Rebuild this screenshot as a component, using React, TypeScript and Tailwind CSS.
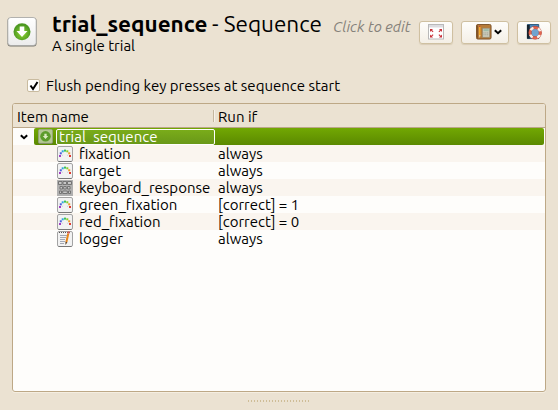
import React from "react";

const SequenceArrow = ({ size, faded = false }: { size: number; faded?: boolean }) => (
  <svg width={size} height={size} viewBox="0 0 30 30" className="block shrink-0">
    <defs>
      <linearGradient id="tile" x2="0" y2="1">
        <stop stopColor="#ffffff" />
        <stop offset="1" stopColor="#ececec" />
      </linearGradient>
      <radialGradient id="leaf" cy=".6">
        <stop stopColor="#91d532" />
        <stop offset="1" stopColor="#4c9820" />
      </radialGradient>
    </defs>
    <rect x=".5" y=".7" width="29" height="28.8" rx="3" fill="#77766f" />
    <rect x=".8" y=".5" width="28.4" height="28" rx="3" fill={faded ? "#b4c795" : "url(#tile)"} stroke={faded ? "#8a9c70" : "#a5a5a2"} strokeWidth=".8" />
    <circle cx="15" cy="14.7" r={faded ? 10.5 : 8.5} fill={faded ? "#5c9c2b" : "url(#leaf)"} />
    <path d="M12.700 9.500h4.600v4.500h3.200L15 20 9.500 14h3.200z" fill={faded ? "#dcebc4" : "#fff"} />
  </svg>
);

const Tile = () => (
  <>
    <rect x=".5" y=".5" width="15" height="15" rx="1.500" fill="#f2f2f2" stroke="#a3a3a3" />
    <path d="M1.500 15.500h13" stroke="#777" />
  </>
);

const SketchIcon = () => (
  <svg width="16" height="16" viewBox="0 0 16 16" className="block shrink-0">
    <Tile />
    <g>
      <rect x="2" y="9" width="2" height="2" fill="#a13bc4" />
      <rect x="2.800" y="6.300" width="2" height="2" fill="#4a62dc" />
      <rect x="4.700" y="4.300" width="2" height="2" fill="#31a5e0" />
      <rect x="7" y="3.600" width="2" height="2" fill="#36c05c" />
      <rect x="9.300" y="4.300" width="2" height="2" fill="#8ccc28" />
      <rect x="11.200" y="6.300" width="2" height="2" fill="#f09a24" />
      <rect x="12" y="9" width="2" height="2" fill="#e03a30" />
      <path d="M5.200 10l.5-1.300M10.300 8.700l.5 1.300" stroke="#c9c8e0" fill="none" strokeWidth=".8" />
    </g>
  </svg>
);

const KeyboardIcon = () => (
  <svg width="16" height="16" viewBox="0 0 16 16" className="block shrink-0">
    <rect width="16" height="16" fill="#b0b0b0" />
    <g fill="#c6c6c6" stroke="#6c6c6c" strokeWidth=".9">
      <path d="M1.500 1.500h3.500v3h-3.500zM6 1.500h3.500v3h-3.500zM10.500 1.500h4v3h-4z" />
      <path d="M3 6.500h2.500v2.500h-2.500zM6.700 6.500h2.500v2.500h-2.500zM10.500 6.500h2.500v2.500h-2.500z" />
      <path d="M2.500 11h2v2.500h-2zM5.700 11h4.600v2.500h-4.600zM11.500 11h2v2.500h-2z" />
    </g>
  </svg>
);

const LoggerIcon = () => (
  <svg width="16" height="16" viewBox="0 0 16 16" className="block shrink-0">
    <Tile />
    <path d="M2 1.500h12" stroke="#555" strokeDasharray="1 1" />
    <path d="M3 4.500h7M3 6.500h6M3 8.500h5M3 10.500h5M3 12.500h4" stroke="#9a9fae" strokeWidth=".9" />
    <path d="M11.300 2.500L9.400 11" stroke="#e8861a" strokeWidth="2" />
    <path d="M10.400 2.200l2 .5.5-2-2-.5z" fill="#e0605a" />
    <path d="M8.400 10.800l2 .5L8.500 14z" fill="#5b4329" />
  </svg>
);

const FullscreenIcon = () => (
  <svg width="16" height="16" viewBox="0 0 16 16" className="block">
    <rect x=".5" y=".5" width="15" height="14.500" fill="#fff" stroke="#b9b9b9" />
    <path d="M1 1h14v2.500H1z" fill="#dcdce0" />
    <g fill="#c8323a">
      <path d="M2 5h3L4 6l1.500 1.500-.8.800L3.200 6.800 2 8zM14 5h-3l1 1-1.500 1.500.8.800 1.500-1.500L14 8zM2 13.500h3l-1-1L5.500 11l-.8-.8-1.500 1.500L2 10.500zM14 13.500h-3l1-1-1.500-1.500.8-.8 1.500 1.500 1.200-1.200z" />
    </g>
  </svg>
);

const NotebookIcon = () => (
  <svg width="16" height="16" viewBox="0 0 17 17" className="block shrink-0">
    <rect x=".5" y=".5" width="15.500" height="15.500" rx="1.500" fill="#b67c3a" stroke="#795027" />
    <path d="M1.500 1.500v14" stroke="#7d4d20" strokeWidth="1" />
    <path d="M4 2.500v10" stroke="#f6ad2d" strokeWidth="1.600" />
    <path d="M3.200 12h1.600L4 15z" fill="#eee0bd" />
    <path d="M3.200 2.500h1.600" stroke="#cb4b36" strokeWidth="1.500" />
    <rect x="7" y="4.500" width="7.500" height="9.500" fill="#cfcfbd" stroke="#908c79" strokeWidth=".7" />
    <rect x="8" y="5.500" width="5.500" height="2.200" fill="#9dbba9" />
    <path d="M8 9.500h5.500M8 11.500h5.500" stroke="#8c8c82" strokeDasharray="1 1" />
  </svg>
);

const HelpIcon = () => (
  <svg width="16" height="16" viewBox="0 0 17 17" className="block">
    <path d="M1.500.5h12v15h-12z" fill="#4a85b9" stroke="#2b5579" />
    <path d="M1 1h3v14.500H1z" fill="#17232e" />
    <circle cx="9.700" cy="9.300" r="5.500" fill="#6fa3cf" stroke="#b23c30" strokeWidth="3.200" />
    <circle cx="9.700" cy="9.300" r="5.500" fill="none" stroke="#e2654f" strokeWidth="2.300" />
    <circle cx="9.700" cy="9.300" r="5.500" fill="none" stroke="#f5efea" strokeWidth="2.600" strokeDasharray="3.600 5.039" strokeDashoffset="-2.520" />
  </svg>
);

const Chevron = ({ className = "" }: { className?: string }) => (
  <svg width="8" height="6" viewBox="0 0 8 6" className={`block shrink-0 ${className}`}>
    <path d="M.8 1.200L4 4.200l3.200-3" fill="none" stroke="#000" strokeWidth="2" />
  </svg>
);

const ToolButton = ({ className, children }: { className: string; children: React.ReactNode }) => (
  <button className={`flex h-[23px] shrink-0 items-center justify-center rounded-[3px] border border-[#cfc0a1] bg-linear-to-b from-[#fefdfb] to-[#f4efe6] pb-[2px] shadow-[0_1px_1px_#d9cdb7] ${className}`}>
    {children}
  </button>
);

const items = [
  { name: "fixation", run: "always", icon: <SketchIcon /> },
  { name: "target", run: "always", icon: <SketchIcon /> },
  { name: "keyboard_response", run: "always", icon: <KeyboardIcon /> },
  { name: "green_fixation", run: "[correct] = 1", icon: <SketchIcon /> },
  { name: "red_fixation", run: "[correct] = 0", icon: <SketchIcon /> },
  { name: "logger", run: "always", icon: <LoggerIcon /> },
];

export default function App() {
  return (
    <div className="flex h-[410px] w-[558px] flex-col overflow-hidden bg-[#ebe2d2] font-['Ubuntu','Noto_Sans',sans-serif] text-[15px] leading-[17px] whitespace-nowrap text-black">
      <header className="flex h-[76px] items-start pl-[7px]">
        <div className="mt-[17px] w-[45px]">
          <SequenceArrow size={30} />
        </div>
        <div className="w-[270px] pt-[10px]">
          <h1 className="flex h-[27px] items-center text-[22.500px] leading-[28px]">
            <span className="w-[162px] font-bold">trial_sequence</span>
            <span>- Sequence</span>
          </h1>
          <p>A single trial</p>
        </div>
        <span className="mt-[18px] ml-[11px] w-[86px] text-[14.800px] text-[#85817a] italic">Click to edit</span>
        <div className="flex pt-[21px]">
          <ToolButton className="w-[34px]"><FullscreenIcon /></ToolButton>
          <ToolButton className="ml-2 w-[48px] gap-[2px] pl-[7px]"><NotebookIcon /><Chevron className="mt-px" /></ToolButton>
          <ToolButton className="ml-2 w-[34px]"><HelpIcon /></ToolButton>
        </div>
      </header>
      <label className="flex h-[27px] items-start pl-[27px]">
        <span className="mt-[3px] flex size-[13px] items-center justify-center rounded-[2px] border border-[#c9bb9f] bg-[#fefdfb]">
          <svg width="10" height="10" viewBox="0 0 10 10"><path d="M1.500 4.500L4 8l4.500-7" fill="none" stroke="#000" strokeWidth="2" /></svg>
        </span>
        <span className="mt-px ml-[6px]">Flush pending key presses at sequence start</span>
      </label>
      <section className="ml-3 flex h-[289px] w-[534px] flex-col overflow-hidden rounded-[3px] border border-[#bda886] bg-[#fefdfb] shadow-[0_1px_0_#f5eee1]">
        <div className="flex h-[24px] shrink-0 items-center border-b border-[#bba789] bg-[#ebe2d2]">
          <span className="w-[200px] pt-px pl-1">Item name</span>
          <span className="h-3 w-px bg-[#c5b79f]" />
          <span className="h-3 w-px bg-[#f7f2e9]" />
          <span className="pt-px pl-[3px]">Run if</span>
        </div>
        <div className="flex h-[17px] shrink-0 items-center pl-[7px]">
          <Chevron className="mr-[6px]" />
          <div className="mr-px flex h-[17px] flex-1 items-center rounded-[2px] bg-linear-to-b from-[#72a803] to-[#5b8900] pl-1">
            <SequenceArrow size={15} faded />
            <span className="ml-[3px] flex h-4 w-[159px] items-center rounded-[2px] border border-white bg-linear-to-b from-[#7aac1a] to-[#699818] pl-[2px] leading-[14px] text-white">trial_sequence</span>
          </div>
        </div>
        {items.map((item) => (
          <div key={item.name} className="flex h-[17px] shrink-0 items-center pl-[44px] odd:bg-[#faf5ef]">
            {item.icon}
            <span className="ml-[6px] w-[139px]">{item.name}</span>
            <span>{item.run}</span>
          </div>
        ))}
      </section>
      <div className="mt-2 ml-[248px] flex gap-[2px]">
        {Array.from({ length: 21 }, (_, i) => (
          <span key={i} className="h-[2px] w-px bg-[#cfbd97]" />
        ))}
      </div>
    </div>
  );
}
